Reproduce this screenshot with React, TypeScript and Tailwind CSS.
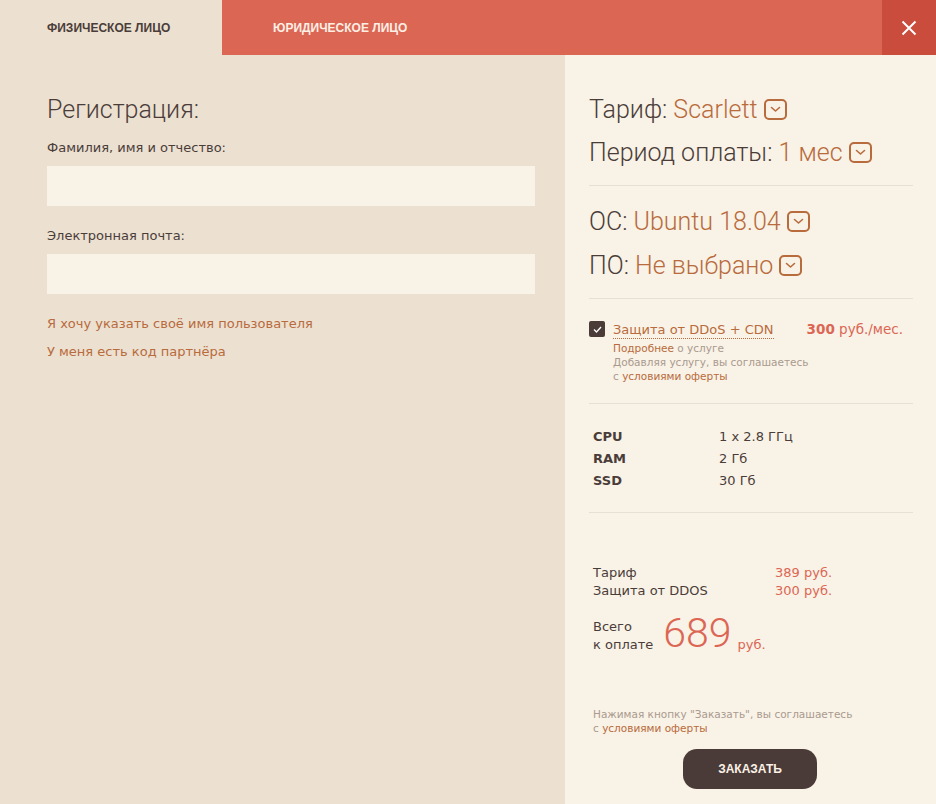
import React from 'react';

const body = { fontFamily: '"DejaVu Sans", Tahoma, sans-serif' };
const light = { fontFamily: 'Roboto, "Helvetica Neue", sans-serif' };
const caps = { fontFamily: '"Liberation Sans", Arial, sans-serif' };

function Chevron() {
  return (
    <span className="ml-[6px] inline-flex h-[21px] w-[23px] items-center justify-center rounded-[5px] border-2 border-[#b86b3c]">
      <svg width="11" height="7" viewBox="0 0 11 7" fill="none">
        <path d="M1.5 1.5 L5.5 5 L9.5 1.5" stroke="#b86b3c" strokeWidth="1.6" strokeLinecap="round" strokeLinejoin="round" />
      </svg>
    </span>
  );
}

function Option({ label, value }: { label: string; value: string }) {
  return (
    <div className="flex h-[25px] items-center text-[25px] font-light leading-none text-[#4a3d39]" style={light}>
      <span>{label}:&nbsp;</span>
      <span className="text-[#b86b3c]">{value}</span>
      <Chevron />
    </div>
  );
}

function Field({ label }: { label: string }) {
  return (
    <div>
      <div className="text-[13px] leading-[16px] text-[#4a3d39]">{label}</div>
      <div className="mt-[10px] h-[40px] w-[488px] bg-[#f9f2e6]" />
    </div>
  );
}

export default function App() {
  const specs = [
    ['CPU', '1 x 2.8 ГГц'],
    ['RAM', '2 Гб'],
    ['SSD', '30 Гб'],
  ];

  return (
    <div className="flex h-[804px] w-[936px] flex-col overflow-hidden bg-[#ece0d1]" style={body}>
      <header className="flex h-[55px] shrink-0">
        <div className="flex w-[222px] items-center pl-[47px] text-[12px] font-bold text-[#4a3d39]" style={caps}>
          ФИЗИЧЕСКОЕ ЛИЦО
        </div>
        <div className="flex flex-1 items-center bg-[#dc6654] pl-[51px] text-[12px] font-bold text-[#fcefe4]" style={caps}>
          ЮРИДИЧЕСКОЕ ЛИЦО
        </div>
        <button className="flex w-[54px] items-center justify-center bg-[#c94c3d]">
          <svg width="16" height="16" viewBox="0 0 16 16">
            <path d="M1.5 1.5 L14.5 14.5 M14.5 1.5 L1.5 14.5" stroke="#fff" strokeWidth="2" />
          </svg>
        </button>
      </header>

      <div className="flex flex-1">
        <section className="w-[565px] shrink-0 px-[47px] pt-[42px]">
          <h1 className="text-[25px] font-light leading-none text-[#4a3d39]" style={light}>Регистрация:</h1>
          <div className="mt-[18px] flex flex-col gap-[22px]">
            <Field label="Фамилия, имя и отчество:" />
            <Field label="Электронная почта:" />
          </div>
          <div className="mt-[22px] flex flex-col gap-[12px] text-[13px] leading-[16px] text-[#b86b3c]">
            <a>Я хочу указать своё имя пользователя</a>
            <a>У меня есть код партнёра</a>
          </div>
        </section>

        <aside className="flex-1 bg-[#f9f2e6] pl-[24px] pr-[23px] pt-[42px]">
          <div className="flex flex-col gap-[18px]">
            <Option label="Тариф" value="Scarlett" />
            <Option label="Период оплаты" value="1 мес" />
          </div>
          <div className="mt-[20px] border-t border-[#e6dfd4]" />
          <div className="mt-[23px] flex flex-col gap-[19px]">
            <Option label="ОС" value="Ubuntu 18.04" />
            <Option label="ПО" value="Не выбрано" />
          </div>
          <div className="mt-[20px] border-t border-[#e6dfd4]" />

          <div className="mt-[22px] flex">
            <span className="flex h-[16px] w-[16px] shrink-0 items-center justify-center rounded-[2px] bg-[#4a3a38]">
              <svg width="9" height="7" viewBox="0 0 9 7" fill="none">
                <path d="M1 3.5 L3.5 6 L8 1" stroke="#fff" strokeWidth="1.3" />
              </svg>
            </span>
            <div className="ml-[8px] flex-1 pr-[10px]">
              <div className="flex items-baseline justify-between">
                <span className="border-b border-dotted border-[#b86b3c] text-[13px] leading-[16px] text-[#b86b3c]">Защита от DDoS + CDN</span>
                <span className="text-[13.5px] leading-[16px] text-[#dc6654]"><b>300</b> руб./мес.</span>
              </div>
              <div className="mt-[2px] text-[10.5px] leading-[14px] text-[#a99a8f]">
                <div><span className="text-[#b86b3c]">Подробнее</span> о услуге</div>
                <div>Добавляя услугу, вы соглашаетесь</div>
                <div>с <span className="text-[#b86b3c]">условиями оферты</span></div>
              </div>
            </div>
          </div>
          <div className="mt-[20px] border-t border-[#e6dfd4]" />

          <div className="mt-[22px] grid grid-cols-[126px_1fr] px-[4px] text-[13px] leading-[22px] text-[#4a3d39]">
            {specs.map(([k, v]) => (
              <React.Fragment key={k}>
                <span className="font-bold">{k}</span>
                <span>{v}</span>
              </React.Fragment>
            ))}
          </div>
          <div className="mt-[20px] border-t border-[#e6dfd4]" />

          <div className="mt-[51px] grid grid-cols-[182px_1fr] px-[4px] text-[13px] leading-[18px] text-[#4a3d39]">
            <span>Тариф</span>
            <span className="text-[#dc6654]">389 руб.</span>
            <span>Защита от DDOS</span>
            <span className="text-[#dc6654]">300 руб.</span>
          </div>
          <div className="mt-[13px] flex items-end px-[4px]">
            <div className="text-[13px] leading-[18px] text-[#4a3d39]">
              <div>Всего</div>
              <div>к оплате</div>
            </div>
            <span className="mb-[1px] ml-[10px] text-[41px] font-light leading-[40px] text-[#dc6654]" style={light}>689</span>
            <span className="ml-[6px] text-[13px] leading-[18px] text-[#dc6654]">руб.</span>
          </div>

          <div className="mt-[53px] px-[4px] text-[10.5px] leading-[14px] text-[#a99a8f]">
            <div>Нажимая кнопку "Заказать", вы соглашаетесь</div>
            <div>с <span className="text-[#b86b3c]">условиями оферты</span></div>
          </div>
          <div className="mt-[14px] flex justify-center pr-[2px]">
            <button className="h-[40px] w-[134px] rounded-[14px] bg-[#4a3a38] text-[12px] font-bold text-[#fbf1e6]" style={caps}>
              ЗАКАЗАТЬ
            </button>
          </div>
        </aside>
      </div>
    </div>
  );
}
